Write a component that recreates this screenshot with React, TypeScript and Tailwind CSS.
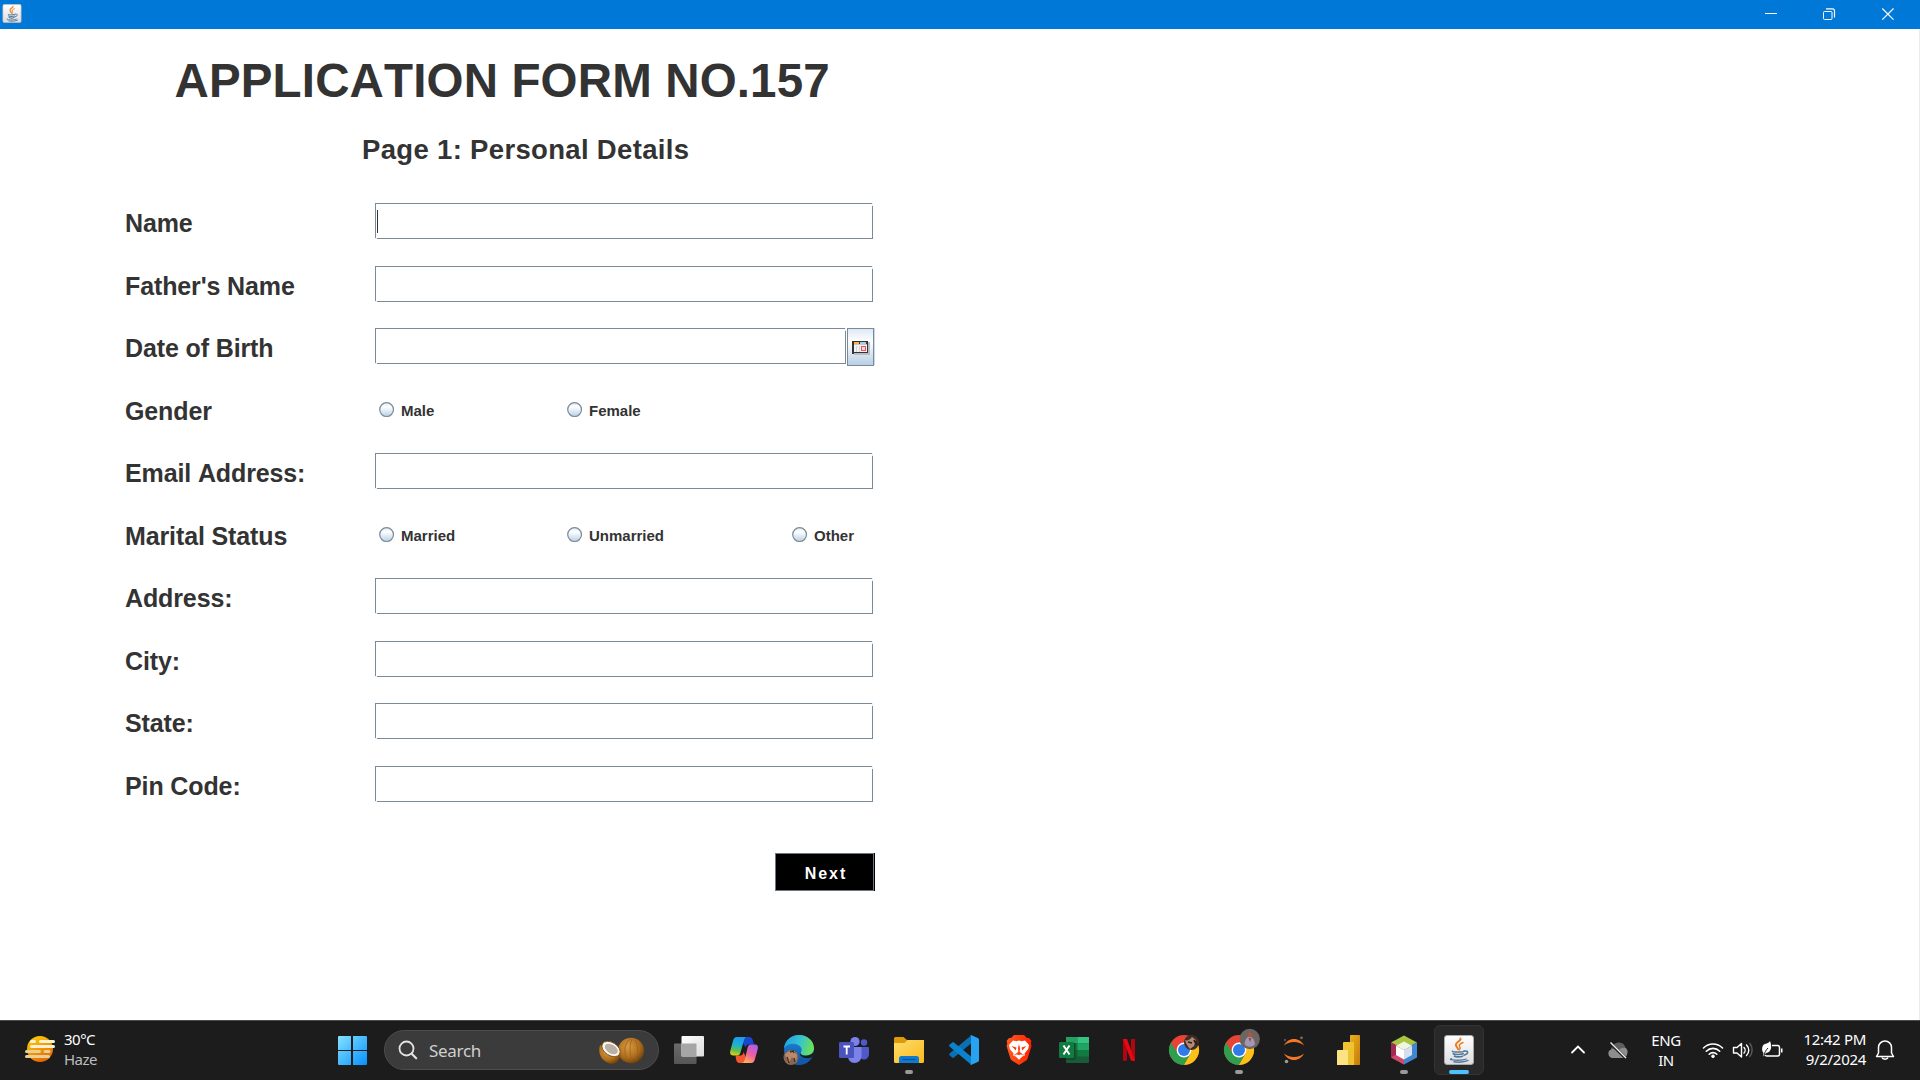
import React from "react";

const UI = "font-['Noto_Sans','Open_Sans',sans-serif]";

function JavaCup({ className }: { className: string }) {
  return (
    <svg viewBox="0 0 30 30" className={className}>
      <defs>
        <linearGradient id="jv" x1="0" y1="0" x2="0" y2="1">
          <stop offset="0" stopColor="#ffffff" />
          <stop offset="1" stopColor="#dcdde0" />
        </linearGradient>
      </defs>
      <rect x="0.5" y="0.5" width="29" height="29" rx="2.5" fill="url(#jv)" stroke="#a9a9ab" />
      <g fill="none" strokeLinecap="round">
        <path d="M16.5 3.5c1 2.400-5.500 3.600-4.600 6.800.3 1.400 1.700 2.200 2.200 4" stroke="#ee7b22" strokeWidth="1.900" />
        <path d="M19 7.500c-3.800 1.500-4.400 2.800-3.200 4.400.7 1 .3 2-.5 3" stroke="#ee7b22" strokeWidth="1.500" />
        <path d="M8.500 16.200c-1 1.200 11 1.200 11.500-.2" stroke="#54789a" strokeWidth="1.500" />
        <path d="M9.300 18.800c1.500 1 7.200.9 9.900 0M10.500 21.300c1.500.9 6 .8 8 0" stroke="#54789a" strokeWidth="1.700" />
        <path d="M20.500 16.200c4.500-1 4 3-.5 4" stroke="#54789a" strokeWidth="1.500" />
        <path d="M7.500 23.800c-5 1.300 10.500 2.300 14.500.2M10 26.800c4 .8 11 .3 14-1.400" stroke="#54789a" strokeWidth="1.400" />
      </g>
    </svg>
  );
}

function TitleBar() {
  return (
    <header className="flex h-[29px] items-start justify-between bg-[#0078d7]">
      <JavaCup className="mt-[4px] ml-[2px] h-[19px] w-[20px]" />
      <svg width="160" height="29" fill="none" stroke="#fff">
        <path d="M5 13.500h12" />
        <rect x="63.500" y="11.500" width="8.500" height="8" rx="1" />
        <path d="M66 8.900h6.500a2 2 0 0 1 2 2v6.500" strokeWidth="1.200" />
        <path d="M122.300 8.500l11.200 11.200M133.500 8.500l-11.200 11.200" strokeWidth="1.200" />
      </svg>
    </header>
  );
}

function Field({ width = "w-[498px]", caret = false }: { width?: string; caret?: boolean }) {
  return (
    <div className={`relative h-[36px] border border-[#7a8a99] bg-white ${width}`}>
      <span className="absolute -top-px -right-px h-[3px] w-px bg-[#eef0f2]" />
      <span className="absolute -bottom-px -left-px h-px w-[2px] bg-[#eef0f2]" />
      {caret && <span className="absolute top-[6px] left-[1px] h-[23px] w-px bg-[#333]" />}
    </div>
  );
}

function Radio({ label, className }: { label: string; className: string }) {
  return (
    <label className={`flex items-start pl-[4px] ${className}`}>
      <svg width="16" height="16" viewBox="0 0 16 16" className="mt-[11px]">
        <defs>
          <linearGradient id="radio" x1="0" y1="0" x2="0" y2="1">
            <stop offset="0" stopColor="#dde8f3" />
            <stop offset="0.300" stopColor="#ffffff" />
            <stop offset="1" stopColor="#b8cfe5" />
          </linearGradient>
        </defs>
        <circle cx="7.600" cy="7.600" r="6.900" fill="url(#radio)" stroke="#7a8a99" strokeWidth="1.200" />
      </svg>
      <span className="mt-[11px] ml-[6px] text-[15px] leading-[18px] font-bold">{label}</span>
    </label>
  );
}

function DateField() {
  return (
    <div className="flex items-start">
      <Field width="w-[471px]" />
      <div className="ml-px flex h-[38px] w-[27px] items-center justify-center border border-[#7a8a99] bg-linear-to-b from-[#dfe9f4] via-white via-35% to-[#b8cfe5]">
        <svg width="18" height="14" viewBox="0 0 18 14" className="mt-[2px] shrink-0" shapeRendering="crispEdges">
          <rect x="2" y="1" width="16" height="13" fill="#b9bcc0" />
          <rect x="0" y="0" width="16" height="12" fill="#333" />
          <rect x="0" y="0" width="2" height="13" fill="#333" />
          <rect x="2" y="1" width="5" height="2" fill="#f5b53f" />
          <rect x="8" y="1" width="6" height="2" fill="#a6cbf7" />
          <rect x="2" y="3" width="13" height="8" fill="#f3f3f3" />
          <rect x="2" y="3" width="13" height="1" fill="#c9c9c9" />
          <path d="M4.500 5v6M7.500 5v6" stroke="#d5d5d5" />
          <rect x="9.500" y="5.500" width="4" height="4" rx="1" fill="#fbd5d5" stroke="#ea5455" />
        </svg>
      </div>
      <span className="h-[37px] w-px bg-[#c8d8e8]" />
    </div>
  );
}

function Row({ label, children }: { label: string; children: React.ReactNode }) {
  return (
    <div className="flex h-[62.5px] items-start">
      <div className="w-[250px] pt-[5px] text-[25px] leading-[30px] font-bold tracking-[-0.120px]">{label}</div>
      {children}
    </div>
  );
}

function Form() {
  return (
    <main className="flex flex-1 flex-col border-r border-[#ececec] bg-white font-['Liberation_Sans',Arial,sans-serif] text-[#333] [font-kerning:none]">
      <h1 className="mt-[25px] ml-[174.500px] text-[47.500px] leading-[54px] font-bold tracking-[0.150px] whitespace-nowrap">
        APPLICATION FORM NO.157
      </h1>
      <h2 className="mt-[26px] ml-[362px] text-[27.500px] leading-[32px] font-bold tracking-[0.330px] whitespace-nowrap">
        Page 1: Personal Details
      </h2>
      <section className="mt-[37px] ml-[125px] flex w-[760px] flex-col">
        <Row label="Name"><Field caret /></Row>
        <Row label="Father's Name"><Field /></Row>
        <Row label="Date of Birth"><DateField /></Row>
        <Row label="Gender">
          <Radio label="Male" className="w-[188px]" />
          <Radio label="Female" className="w-[225px]" />
        </Row>
        <Row label="Email Address:"><Field /></Row>
        <Row label="Marital Status">
          <Radio label="Married" className="w-[188px]" />
          <Radio label="Unmarried" className="w-[225px]" />
          <Radio label="Other" className="w-[90px]" />
        </Row>
        <Row label="Address:"><Field /></Row>
        <Row label="City:"><Field /></Row>
        <Row label="State:"><Field /></Row>
        <Row label="Pin Code:"><Field /></Row>
      </section>
      <button className="mt-[25px] ml-[775px] h-[38px] w-[100px] border-r border-black bg-black">
        <span className="flex h-full items-center justify-center border border-[#6b7884] pt-[4px] pl-[3px] text-[16px] font-bold tracking-[1.900px] text-white">
          Next
        </span>
      </button>
    </main>
  );
}

function Weather() {
  return (
    <div className={`flex w-[337px] items-start pl-[25px] ${UI}`}>
      <svg width="30" height="30" viewBox="0 0 30 30" className="mt-[15px]">
        <defs>
          <linearGradient id="sun" x1="0.200" y1="0" x2="0.700" y2="1">
            <stop offset="0" stopColor="#ffcf0a" />
            <stop offset="1" stopColor="#e4600a" />
          </linearGradient>
        </defs>
        <circle cx="15" cy="14" r="13" fill="url(#sun)" />
        <g strokeWidth="3" strokeLinecap="round" fill="none">
          <path d="M6.500 6.500h3M15.500 6.500h13M6.500 11.500h22" stroke="#fff3cf" />
          <path d="M1.500 16.500h13M20 16.500h4M1.500 21.500h22" stroke="#e9cf90" />
        </g>
      </svg>
      <div className="mt-[9px] ml-[9px] text-[15px] leading-[20px]">
        <div className="tracking-[-0.500px] text-white">30°C</div>
        <div className="tracking-[-0.500px] text-[#bdbdbd]">Haze</div>
      </div>
    </div>
  );
}

function Search() {
  return (
    <div className={`mt-[10px] ml-[17px] flex h-[40px] w-[275px] items-center rounded-full border border-[#4d4d4d] bg-[#3b3b3b] ${UI}`}>
      <svg width="20" height="20" viewBox="0 0 20 20" className="ml-[13px]" fill="none" stroke="#e2e2e2" strokeWidth="1.800" strokeLinecap="round">
        <circle cx="8.500" cy="8.500" r="7" />
        <path d="M13.700 13.700l4.500 4.500" strokeWidth="2.200" />
      </svg>
      <span className="mt-px ml-[11px] w-[169px] text-[17px] leading-[24px] tracking-[-0.300px] text-[#cfcfcf]">Search</span>
      <svg width="48" height="28" viewBox="0 0 48 28" className="mt-[2px]">
        <defs>
          <radialGradient id="coco" cx="0.400" cy="0.350" r="0.700">
            <stop offset="0" stopColor="#d99a45" />
            <stop offset="0.600" stopColor="#b06f1c" />
            <stop offset="1" stopColor="#6d3d08" />
          </radialGradient>
        </defs>
        <ellipse cx="33" cy="13.500" rx="13" ry="12.700" fill="url(#coco)" />
        <path d="M32 2c-7 5-6 17-2 22M34 2c-3 6-2 16 0 22M36 2c5 6 4 15 2 21" fill="none" stroke="#96601c" strokeWidth="0.700" />
        <path d="M2 8C-1 18 5 26 14 27c5 0 8-5 8.500-10z" fill="url(#coco)" />
        <ellipse cx="13" cy="12" rx="10" ry="6.500" transform="rotate(32 13 12)" fill="#fbf7ef" stroke="#7a4a17" strokeWidth="0.800" />
        <ellipse cx="13.300" cy="12" rx="7.300" ry="4.300" transform="rotate(32 13.300 12)" fill="#b9b1a6" />
      </svg>
    </div>
  );
}

function Svg({ children }: { children: React.ReactNode }) {
  return (
    <svg width="30" height="30" viewBox="0 0 30 30" className="overflow-visible">
      {children}
    </svg>
  );
}

const TaskView = () => (
  <Svg>
    <defs>
      <linearGradient id="tv" x1="0" y1="0" x2="1" y2="1">
        <stop offset="0" stopColor="#fff" />
        <stop offset="1" stopColor="#dcdcdc" />
      </linearGradient>
      <linearGradient id="tv2" x1="0" y1="0" x2="0" y2="1">
        <stop offset="0" stopColor="#6b6b6b" />
        <stop offset="1" stopColor="#565656" />
      </linearGradient>
    </defs>
    <rect x="0" y="8.500" width="22.500" height="20.500" rx="1" fill="url(#tv2)" />
    <rect x="7.500" y="1" width="22.500" height="20.500" rx="1" fill="url(#tv)" />
    <rect x="7.500" y="8.500" width="15" height="13" fill="#a6a6a6" />
  </Svg>
);

const Copilot = () => (
  <Svg>
    <defs>
      <linearGradient id="cp1" x1="0.300" y1="0" x2="0.100" y2="1">
        <stop offset="0" stopColor="#1f9bea" />
        <stop offset="0.350" stopColor="#19b0d8" />
        <stop offset="0.700" stopColor="#62bf4e" />
        <stop offset="1" stopColor="#f5d20c" />
      </linearGradient>
      <linearGradient id="cp2" x1="0.800" y1="0" x2="0.300" y2="1">
        <stop offset="0" stopColor="#a95df0" />
        <stop offset="0.550" stopColor="#f0609a" />
        <stop offset="1" stopColor="#ffb258" />
      </linearGradient>
    </defs>
    <path d="M11 2h9c2.500 0 3.300 1.500 4 4l1 3.500h-5c-2 0-3 1-3.500 3z" fill="#1748cf" />
    <path d="M19 28h-8.500c-2 0-3-1.500-3.500-4l-.5-3.500h5c1.800 0 2.600-1.500 3.200-3.500z" fill="#f4562f" />
    <path d="M8 2h10c-2 0-2.700 2-3.300 4l-3.200 11.500c-.6 2-1.500 3-3.500 3H4c-2.600 0-3.500-2-2.700-4.700L4 6c.7-2.500 1.700-4 4-4z" fill="url(#cp1)" />
    <path d="M22 28h-9.500c2 0 2.800-1.500 3.300-3.500L18.500 13c.5-2 1.500-3.500 3.500-3.500h4c2.500 0 3.500 2 2.700 4.800L26 24c-.7 2.500-1.700 4-4 4z" fill="url(#cp2)" />
  </Svg>
);

const Edge = () => (
  <Svg>
    <defs>
      <linearGradient id="eg1" x1="0" y1="0.300" x2="1" y2="0.500">
        <stop offset="0" stopColor="#1fa1e6" />
        <stop offset="0.500" stopColor="#35c1d4" />
        <stop offset="1" stopColor="#6fe34e" />
      </linearGradient>
      <linearGradient id="eg2" x1="0" y1="0" x2="0" y2="1">
        <stop offset="0" stopColor="#1b8fe0" />
        <stop offset="1" stopColor="#0f4f9e" />
      </linearGradient>
    </defs>
    <circle cx="15" cy="15" r="15" fill="url(#eg2)" />
    <path d="M10 19c2 7 10 8 18 3.500C24 29 17 31 11 29.500z" fill="#1459a8" />
    <path d="M0 13C1 5 7.500 0 15 0c8.500 0 15 6 15 13 0 5-4 7.500-8.500 7.500-4 0-5.500-1.800-4.500-3.500 1-1.500 1-3.500-.5-5.300C13 7.500 4 7.500 0 13z" fill="url(#eg1)" />
    <path d="M31 15c-2 4-5 5.700-9 5.700-4 0-6-1.200-6-3.200-1 4.500 6 7.500 12.500 4.500z" fill="#1c1c1c" />
    <circle cx="7" cy="22.500" r="7.500" fill="#8b6550" />
    <path d="M1 19c3-3 7-4 9-3l3 4-1 8-4-6-4 7z" fill="#b98b6c" />
    <path d="M6 17l3-1 1 2M3 22l2 6M10 23l1 4" stroke="#46302a" strokeWidth="1.500" fill="none" />
  </Svg>
);

const Teams = () => (
  <Svg>
    <circle cx="25" cy="7.500" r="3.200" fill="#5059c9" />
    <circle cx="16" cy="6.500" r="4.600" fill="#7b83eb" />
    <path d="M21 12h8a1 1 0 0 1 1 1v6c0 3.500-2.500 5.500-5 5.500s-4-1.500-4-3z" fill="#5059c9" />
    <path d="M9 12h13.500v9c0 4-3 7-7 7s-6.500-3-6.500-7z" fill="#7b83eb" />
    <rect x="0" y="7" width="15" height="16" rx="1.300" fill="#4b53bc" />
    <path d="M4.500 11.500h6.500M7.700 11.500v8" stroke="#fff" strokeWidth="1.800" />
  </Svg>
);

const Folder = () => (
  <Svg>
    <defs>
      <linearGradient id="fd" x1="0" y1="0" x2="1" y2="1">
        <stop offset="0" stopColor="#ffdd6b" />
        <stop offset="1" stopColor="#fbb91c" />
      </linearGradient>
    </defs>
    <path d="M0 3.500A1.500 1.500 0 0 1 1.500 2H9.500l3.500 3h15.500A1.500 1.500 0 0 1 30 6.500V12H0z" fill="#dd9b0b" />
    <path d="M0 8h10.500L13.500 5H30v21.500a1.500 1.500 0 0 1-1.500 1.500h-27A1.500 1.500 0 0 1 0 26.500z" fill="url(#fd)" />
    <path d="M5 28v-4.500a2.500 2.500 0 0 1 2.500-2.500h15a2.500 2.500 0 0 1 2.500 2.500V28z" fill="#0f7ad1" />
    <path d="M8.500 24.500h13" stroke="#084f95" strokeWidth="1.200" />
  </Svg>
);

const VSCode = () => (
  <Svg>
    <path d="M22 0.500v8L5 22.500c-.7.500-1.300.5-1.800 0L.8 20.500c-.8-.7-.8-1.500 0-2.200z" fill="#0b6fb5" />
    <path d="M22 29.500v-8L5 7.500c-.7-.5-1.300-.5-1.800 0L.8 9.500c-.8.700-.8 1.500 0 2.200z" fill="#0c82cf" />
    <path d="M22 0l6.700 3c.8.400 1.300 1 1.300 2v20c0 1-.5 1.600-1.300 2L22 30c-.6.200-1 0-1.300-.4.700.4 1.300 0 1.300-.8V1.200c0-.8-.6-1.200-1.300-.8.300-.4.700-.6 1.300-.4z" fill="#28a3f0" />
  </Svg>
);

const Brave = () => (
  <Svg>
    <defs>
      <linearGradient id="br" x1="0" y1="0" x2="1" y2="0">
        <stop offset="0" stopColor="#ff5a1f" />
        <stop offset="1" stopColor="#ff2300" />
      </linearGradient>
    </defs>
    <path d="M10 0h10l3 3h2l2.500 3-.8 2 .8 3-3.700 12c-.4 1.400-1 2-2 2.700L15 30l-6.800-4.300c-1-.7-1.600-1.300-2-2.700L2.500 11l.8-3-.8-2L5 3h2z" fill="url(#br)" />
    <path d="M9 5.500l3.500.7L15 5.500l2.500.7 3.500-.7 4 4.500-.8 4-3.700 4.500.3 2-2.500 1L15 24.800 11.700 21.500l-2.500-1 .3-2L5.800 14 5 10z" fill="#fff" />
    <path d="M7.500 11l5 1.500-.7 3zM22.500 11l-5 1.500.7 3zM14 13l1-4 1 4-.3 4 2.300 1.500-3 1.800-3-1.800 2.300-1.500z" fill="#ff3d0c" />
    <path d="M10 20l5-1.500 5 1.500" stroke="#ff3d0c" strokeWidth="0.700" fill="none" />
  </Svg>
);

const Excel = () => (
  <Svg>
    <rect x="7" y="2" width="23" height="26" rx="1" fill="#185c37" />
    <rect x="7" y="2" width="11.500" height="6.500" fill="#21a366" />
    <rect x="18.500" y="2" width="11.500" height="6.500" fill="#33c481" />
    <rect x="7" y="8.500" width="11.500" height="6.500" fill="#107c41" />
    <rect x="18.500" y="8.500" width="11.500" height="6.500" fill="#21a366" />
    <rect x="18.500" y="15" width="11.500" height="6.500" fill="#107c41" />
    <rect x="7" y="8" width="9.500" height="17" fill="#124a2c" />
    <rect x="0" y="7" width="15" height="16" rx="1.200" fill="#107c41" />
    <path d="M4.500 10.500l6 9M10.500 10.500l-6 9" stroke="#fff" strokeWidth="2" />
  </Svg>
);

const Netflix = () => (
  <Svg>
    <path d="M9 4h4v21.500l-4 .5zM17 4h4v22l-4-.5z" fill="#b1060f" />
    <path d="M9 4h4l8 22-4-.5z" fill="#e50914" />
  </Svg>
);

const ChromeDisc = () => (
  <>
    <circle cx="15" cy="15" r="15" fill="#ea4335" />
    <path d="M2 7.500A15 15 0 0 0 15 30l6.500-11.200H9z" fill="#2f9e4f" />
    <path d="M28 7.500A15 15 0 0 1 15 30l6.500-11.200L15 7.500z" fill="#fbc116" />
    <circle cx="15" cy="15" r="7.400" fill="#fff" />
    <circle cx="15" cy="15" r="6" fill="#2f7bea" />
  </>
);

const ChromeA = () => (
  <Svg>
    <ChromeDisc />
    <circle cx="22.500" cy="7.500" r="7.500" fill="#3f2c25" />
    <path d="M16 5c2 1 5 0 7-3l4 3-2 6-4 3c-2-2-4-5-5-9z" fill="#b28a72" />
    <path d="M19 7l4 1M25 5l3 5" stroke="#2a1c19" strokeWidth="1.800" />
  </Svg>
);

const ChromeB = () => (
  <Svg>
    <ChromeDisc />
    <circle cx="25.700" cy="4" r="10.200" fill="#6e6460" />
    <path d="M24-2c2-2 4 0 4 2l-.5 5h-3.500z" fill="#a55a45" />
    <path d="M20.500 9c1-6 2.500-7 5-7s4.500 1 5.500 7c-2 3.500-8 3.500-10.500 0z" fill="#a596b5" />
    <path d="M24.500 3l1.500 4 1.500-4z" fill="#8a4c44" />
  </Svg>
);

const Jupyter = () => (
  <Svg>
    <path d="M5 10.500C7 6.500 10.500 4 15 4s8 2.500 10 6.500c-2.500-2.300-6-3.500-10-3.500s-7.500 1.200-10 3.500z" fill="#f37726" />
    <path d="M5 18.500C7 22.500 10.500 25 15 25s8-2.500 10-6.500c-2.500 2.300-6 3.500-10 3.500s-7.500-1.200-10-3.500z" fill="#f37726" />
    <circle cx="22.500" cy="2.800" r="1.400" fill="#6f6f6f" />
    <circle cx="6" cy="5" r="0.900" fill="#6f6f6f" />
    <circle cx="7.500" cy="26.500" r="1.800" fill="#999" />
  </Svg>
);

const PowerBI = () => (
  <Svg>
    <defs>
      <linearGradient id="pb" x1="0" y1="0" x2="1" y2="1">
        <stop offset="0" stopColor="#ebb11c" />
        <stop offset="1" stopColor="#c47a0c" />
      </linearGradient>
    </defs>
    <rect x="16" y="0" width="10" height="30" rx="0.800" fill="url(#pb)" />
    <path d="M9 8a1 1 0 0 1 1-1h9a1 1 0 0 1 1 1v22H9z" fill="#efc22f" />
    <path d="M3 16a1 1 0 0 1 1-1h9a1 1 0 0 1 1 1v14H3z" fill="#fbe283" />
  </Svg>
);

const NetBeans = () => (
  <Svg>
    <path d="M15 0.500l13 7-13 7-13-7z" fill="#a9c43f" />
    <path d="M2 7.500l13 7v15l-13-7z" fill="#a32b51" />
    <path d="M28 7.500l-13 7v15l13-7z" fill="#3f87d3" />
    <path d="M2 22.500l6-3.500 7 4v6.500z" fill="#d04a6d" />
    <path d="M15 6.500l8 4.300-8 4.200-8-4.200z" fill="#f1f5df" />
    <path d="M7 10.800l8 4.200v9.500l-8-4.500z" fill="#fff" />
    <path d="M23 10.800L15 15v9.500l8-4.500z" fill="#d5dfee" />
  </Svg>
);

const apps: { name: string; icon: () => React.ReactElement; open?: boolean; active?: boolean }[] = [
  { name: "Task view", icon: TaskView },
  { name: "Copilot", icon: Copilot },
  { name: "Edge", icon: Edge },
  { name: "Teams", icon: Teams },
  { name: "Explorer", icon: Folder, open: true },
  { name: "Code", icon: VSCode },
  { name: "Brave", icon: Brave },
  { name: "Excel", icon: Excel },
  { name: "Netflix", icon: Netflix },
  { name: "Chrome", icon: ChromeA },
  { name: "Chrome profile", icon: ChromeB, open: true },
  { name: "Jupyter", icon: Jupyter },
  { name: "Power BI", icon: PowerBI },
  { name: "NetBeans", icon: NetBeans, open: true },
  { name: "Java", icon: () => <JavaCup className="size-[30px]" />, active: true },
];

function Tray() {
  return (
    <div className={`ml-auto flex h-full items-start text-[15px] leading-[20px] text-white ${UI}`}>
      <svg width="60" height="60" viewBox="0 0 60 60" fill="none">
        <path d="M4 32.500l6-6 6 6" stroke="#fff" strokeWidth="1.800" strokeLinecap="round" />
        <path d="M44 38a4.500 4.500 0 0 1-1-8.500c1-3 3-5.500 6-6.500 4-1 7 1 8 4.500 2 1 3 3 2.500 5.500-.5 3-2 5-5 5z" fill="#8d8d8d" />
        <path d="M43 29.500c3-1.500 5-1 7 1.500 2-3 5-4 7.500-3C56.500 23.500 53 22 49 23c-3 1-5 3.500-6 6.500z" fill="#5e5e5e" />
        <path d="M41.500 22.500l16 15.500" stroke="#1c1c1c" strokeWidth="3" />
        <path d="M42.500 22.500l15.500 15.500" stroke="#eee" strokeWidth="1.400" />
      </svg>
      <div className="mt-[10px] ml-[6px] w-[64px] text-center tracking-[-0.400px]">
        <div>ENG</div>
        <div>IN</div>
      </div>
      <svg width="90" height="60" viewBox="0 0 90 60" fill="none" stroke="#fff" strokeWidth="1.600" className="ml-[1px]">
        <path d="M4.500 28a13.300 13.300 0 0 1 19 0M7.300 31.200a9.400 9.400 0 0 1 13.400 0M10.200 34.200a5.300 5.300 0 0 1 7.600 0" strokeLinecap="round" />
        <circle cx="14" cy="36.300" r="1.400" fill="#fff" strokeWidth="0.800" />
        <path d="M34.500 27.500h3.500l4.500-4v13.500l-4.500-4h-3.500z" strokeWidth="1.400" strokeLinejoin="round" />
        <path d="M45 27.500c1.500 1.500 1.500 4 0 5.500M47.500 25c3 3 3 7.500 0 10.500" strokeWidth="1.400" strokeLinecap="round" />
        <path d="M50.500 23c3.500 4 3.500 10 0 14" stroke="#5a5a5a" strokeWidth="1.400" />
        <path d="M73 25.500h5.500a2 2 0 0 1 2 2v6.500a2 2 0 0 1-2 2H68a2 2 0 0 1-2-1" strokeWidth="1.500" />
        <rect x="82" y="28.500" width="1.500" height="4" fill="#fff" stroke="none" />
        <path d="M71 21c2 5 2 11-4 12l-2.500 3.500c-.5-1.500 0-3 0-3.500-2-2-2-8 1.500-9 2-.5 4-1 5-3z" fill="#fff" stroke="none" />
        <path d="M65 35.500c.5-3 2-5.500 4-7.500" stroke="#1c1c1c" strokeWidth="1" />
      </svg>
      <div className="mt-[9px] w-[77px] text-right tracking-[-0.300px]">
        <div>12:42 PM</div>
        <div>9/2/2024</div>
      </div>
      <svg width="54" height="60" viewBox="0 0 54 60" fill="none" stroke="#fff" strokeWidth="1.500" strokeLinejoin="round">
        <path d="M12.500 33v-5.500a6.500 6.500 0 0 1 13 0V33l2 3.500h-17z" />
        <path d="M16 37.500c.8 2.200 5.200 2.200 6 0" />
      </svg>
    </div>
  );
}

function Taskbar() {
  return (
    <footer className="flex h-[60px] items-start bg-[#1c1c1c] shadow-[inset_0_1px_0_#484b4d]">
      <Weather />
      <svg width="30" height="30" viewBox="0 0 30 30" className="mt-[15px]">
        <defs>
          <linearGradient id="win" gradientUnits="userSpaceOnUse" x1="0" y1="0" x2="30" y2="30">
            <stop offset="0" stopColor="#8ae4ff" />
            <stop offset="1" stopColor="#0591fb" />
          </linearGradient>
        </defs>
        <path d="M2 1h12v14H1V2a1 1 0 0 1 1-1zM16 1h13a1 1 0 0 1 1 1v13H16zM1 16h13v14H2a1 1 0 0 1-1-1zM16 16h14v13a1 1 0 0 1-1 1H16z" fill="url(#win)" />
      </svg>
      <Search />
      <nav className="ml-[2.500px] flex">
        {apps.map(({ name, icon: Icon, open, active }) => (
          <div key={name} className="relative flex h-[60px] w-[55px] items-center justify-center">
            {active && <span className="absolute top-[5px] left-[2.500px] h-[50px] w-[50px] rounded-md border border-[#333] bg-[#292929]" />}
            <span className="relative">
              <Icon />
            </span>
            {open && <span className="absolute top-[50px] h-[4px] w-[8px] rounded-full bg-[#9a9a9a]" />}
            {active && <span className="absolute top-[50px] h-[4px] w-[20px] rounded-full bg-[#4cc2ff]" />}
          </div>
        ))}
      </nav>
      <Tray />
    </footer>
  );
}

export default function App() {
  return (
    <div className="flex h-[1080px] w-[1920px] flex-col overflow-hidden bg-white">
      <TitleBar />
      <Form />
      <Taskbar />
    </div>
  );
}
